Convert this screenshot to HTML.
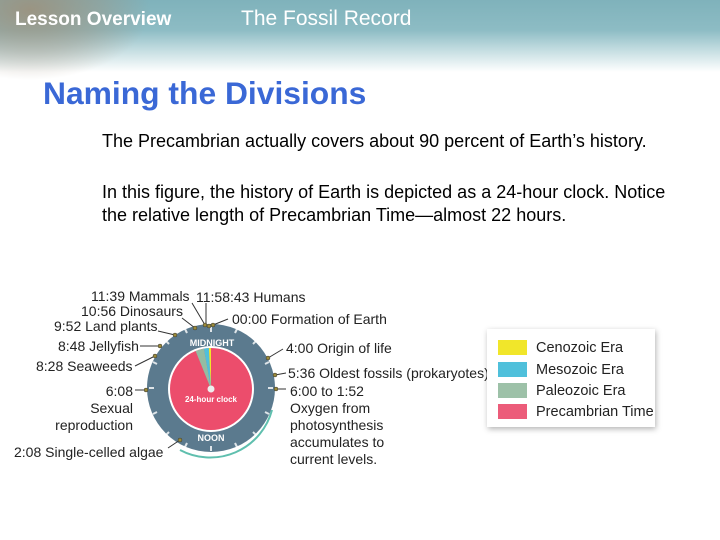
<!DOCTYPE html>
<html><head><meta charset="utf-8"><style>
body{margin:0;width:720px;height:540px;overflow:hidden;background:#fff;font-family:"Liberation Sans",sans-serif;position:relative}
.hdr{position:absolute;left:0;top:0;width:720px;height:75px;background:linear-gradient(to bottom,#7fb2bb 0px,#8dbcc4 30px,#c4dde1 50px,#fff 72px)}
.fossil{position:absolute;left:0;top:0;width:170px;height:90px;background:radial-gradient(ellipse 120px 70px at 30px 10px,rgba(160,140,115,.8),rgba(160,145,125,.4) 60%,rgba(255,255,255,0) 100%)}
.h1{position:absolute;left:15px;top:9px;color:#fff;font-weight:bold;font-size:19px}
.h2{position:absolute;left:241px;top:7px;color:#fff;font-size:21px}
.title{position:absolute;left:43px;top:75px;color:#3a68d6;font-weight:bold;font-size:31.8px}
.p{position:absolute;left:102px;color:#000;font-size:18px;line-height:23px;white-space:nowrap}
</style></head><body>
<div class="hdr"></div><div class="fossil"></div>
<div class="h1">Lesson Overview</div>
<div class="h2">The Fossil Record</div>
<div class="title">Naming the Divisions</div>
<div class="p" style="top:130px">The Precambrian actually covers about 90 percent of Earth’s history.</div>
<div class="p" style="top:181px">In this figure, the history of Earth is depicted as a 24-hour clock. Notice<br>the relative length of Precambrian Time—almost 22 hours.</div>
<svg width="720" height="540" style="position:absolute;left:0;top:0" font-family="Liberation Sans,sans-serif">
<circle cx="211" cy="388" r="64" fill="#5b7a8e"/>
<circle cx="211" cy="389" r="43" fill="#fff"/>
<circle cx="211" cy="389" r="41" fill="#ec4d6c"/>
<path d="M211 389 L195.6 351 A41 41 0 0 1 203.9 348.6Z" fill="#94bca2"/>
<path d="M211 389 L203.9 348.6 A41 41 0 0 1 208.9 348Z" fill="#4fc0db"/>
<path d="M211 389 L208.9 348 A41 41 0 0 1 211 348Z" fill="#f1e62a"/>
<circle cx="211" cy="389" r="3.5" fill="#eee"/>
<text x="211" y="402" font-size="8" fill="#fff" text-anchor="middle" font-weight="bold">24-hour clock</text>
<g fill="#fff" font-size="9" font-weight="bold" text-anchor="middle">
<text x="212" y="346">MIDNIGHT</text><text x="211" y="441">NOON</text>
</g>
<g stroke="#fff" stroke-width="2" opacity=".8">
<line x1="211" y1="327" x2="211" y2="332"/><line x1="211" y1="446" x2="211" y2="451"/>
<line x1="149" y1="388" x2="154" y2="388"/><line x1="268" y1="388" x2="273" y2="388"/>
<line x1="253" y1="344" x2="256" y2="341"/><line x1="169" y1="344" x2="166" y2="341"/>
<line x1="253" y1="432" x2="256" y2="435"/><line x1="169" y1="432" x2="166" y2="435"/>
<line x1="265" y1="364" x2="269" y2="362"/><line x1="157" y1="364" x2="153" y2="362"/>
<line x1="265" y1="412" x2="269" y2="414"/><line x1="157" y1="412" x2="153" y2="414"/>
<line x1="235" y1="333" x2="237" y2="329"/><line x1="187" y1="333" x2="185" y2="329"/>
<line x1="235" y1="443" x2="237" y2="447"/><line x1="187" y1="443" x2="185" y2="447"/>
</g>
<path d="M272 410 A64 64 0 0 1 180 450" fill="none" stroke="#5fbfae" stroke-width="2"/>
<g stroke="#333" stroke-width="1" fill="none">
<path d="M192 303 L205 325"/><path d="M206 303 L206 325"/><path d="M228 319 L213 325"/>
<path d="M182 318 L195 328"/><path d="M158 331 L175 335"/><path d="M140 346 L160 346"/>
<path d="M135 366 L155 356"/><path d="M283 349 L268 358"/><path d="M286 373 L275 375"/>
<path d="M286 389 L276 389"/><path d="M135 390 L146 390"/><path d="M168 448 L180 440"/>
</g>
<g fill="#9a8a3a" stroke="#333" stroke-width=".5">
<circle cx="205" cy="325" r="2"/><circle cx="209" cy="326" r="2"/><circle cx="213" cy="325" r="2"/>
<circle cx="195" cy="328" r="2"/><circle cx="175" cy="335" r="2"/><circle cx="160" cy="346" r="2"/>
<circle cx="155" cy="356" r="2"/><circle cx="268" cy="358" r="2"/><circle cx="275" cy="375" r="2"/>
<circle cx="276" cy="389" r="2"/><circle cx="146" cy="390" r="2"/><circle cx="180" cy="440" r="2"/>
</g>
<g font-size="14" fill="#222">
<text x="91" y="301">11:39 Mammals</text><text x="196" y="302">11:58:43 Humans</text>
<text x="81" y="316">10:56 Dinosaurs</text><text x="232" y="324">00:00 Formation of Earth</text>
<text x="54" y="331">9:52 Land plants</text><text x="58" y="351">8:48 Jellyfish</text>
<text x="36" y="371">8:28 Seaweeds</text><text x="286" y="353">4:00 Origin of life</text>
<text x="288" y="378">5:36 Oldest fossils (prokaryotes)</text>
<text x="290" y="396">6:00 to 1:52</text><text x="290" y="413">Oxygen from</text>
<text x="290" y="430">photosynthesis</text><text x="290" y="447">accumulates to</text>
<text x="290" y="464">current levels.</text>
<text x="133" y="396" text-anchor="end">6:08</text>
<text x="133" y="413" text-anchor="end">Sexual</text>
<text x="133" y="430" text-anchor="end">reproduction</text>
<text x="14" y="457">2:08 Single-celled algae</text>
</g>
<rect x="487" y="329" width="168" height="98" fill="#fff" style="filter:drop-shadow(1px 2px 3px rgba(0,0,0,.3))"/>
<rect x="498" y="340" width="29" height="15" fill="#f1e62a"/>
<rect x="498" y="362" width="29" height="15" fill="#4fc0db"/>
<rect x="498" y="383" width="29" height="15" fill="#9dc1a8"/>
<rect x="498" y="404" width="29" height="15" fill="#ec5c7a"/>
<g font-size="14.5" fill="#222">
<text x="536" y="352">Cenozoic Era</text><text x="536" y="374">Mesozoic Era</text>
<text x="536" y="395">Paleozoic Era</text><text x="536" y="416">Precambrian Time</text>
</g>
</svg>
</body></html>
